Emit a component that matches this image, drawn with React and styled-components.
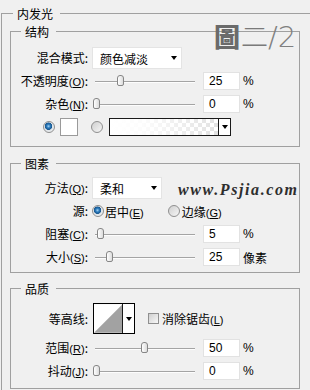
import React from 'react';
import styled, { createGlobalStyle } from 'styled-components';

const Global = createGlobalStyle`
  html, body { margin: 0; padding: 0; background: #f0f0f0; }
  body {
    font-family: "Noto Sans CJK SC", "Noto Sans", sans-serif;
    font-size: 12px;
    color: #000;
  }
`;

const Page = styled.div`
  position: relative;
  width: 310px;
  height: 390px;
  overflow: hidden;
  box-sizing: border-box;
  padding: 6px 0 0 1px;
`;

const Outer = styled.fieldset`
  margin: 0;
  padding: 0;
  min-width: 0;
  border: 1px solid #a0a0a0;
  border-right: none;
  border-bottom: none;
`;

const Legend = styled.legend`
  margin-left: ${p => p.$ml}px;
  padding: 0 7px 0 4px;
  line-height: 15px;
  font-size: 12px;
`;

const Stack = styled.div`
  display: flex;
  flex-direction: column;
  padding: 3px 0 20px 8px;
`;

const Group = styled.fieldset`
  margin: ${p => p.$mt || 0}px 0 0 0;
  padding: 0;
  min-width: 0;
  width: 290px;
  box-sizing: border-box;
  border: 1px solid #a0a0a0;
`;

const Rows = styled.div`
  display: flex;
  flex-direction: column;
  gap: 1px;
  padding: ${p => p.$pt}px 0 ${p => p.$pb}px 0;
`;

const Row = styled.div`
  display: flex;
  align-items: center;
  height: ${p => p.$h || 22}px;
  margin-bottom: ${p => p.$mb || 0}px;
  white-space: nowrap;
`;

const Label = styled.span`
  width: 77px;
  flex-shrink: 0;
  margin-right: 4px;
  text-align: right;
  line-height: 22px;
`;

const Key = styled.span`
  font-family: "Liberation Sans", Arial, sans-serif;
  font-size: 11px;
  u { text-underline-offset: 1px; }
`;

const Select = styled.div`
  display: flex;
  align-items: center;
  justify-content: space-between;
  box-sizing: border-box;
  width: ${p => p.$w}px;
  height: 22px;
  padding: 0 4px 0 7px;
  background: #fff;
  border: 1px solid #e4e4e4;
`;

const Caret = styled.span`
  width: 0;
  height: 0;
  border-left: 3.5px solid transparent;
  border-right: 3.5px solid transparent;
  border-top: 4px solid #000;
`;

const SliderBox = styled.div`
  position: relative;
  width: 106px;
  height: 22px;
  flex-shrink: 0;
`;

const Track = styled.div`
  position: absolute;
  left: 3px;
  right: 3px;
  top: 11px;
  height: 1px;
  background: #a4a4a4;
  border-bottom: 1px solid #fdfdfd;
`;

const Thumb = styled.div`
  position: absolute;
  top: 5px;
  width: 7px;
  height: 11px;
  box-sizing: border-box;
  border: 1px solid #868686;
  border-radius: 3px 3px 2px 2px;
  background: linear-gradient(to right, #ffffff, #dcdcdc);
`;

const NumBox = styled.div`
  box-sizing: border-box;
  width: 37px;
  height: 18px;
  margin-left: 5px;
  padding-left: 5px;
  background: #fff;
  border: 1px solid #e2e2e2;
  font-family: "Liberation Sans", Arial, sans-serif;
  font-size: 12px;
  line-height: 16px;
`;

const Unit = styled.span`
  margin-left: ${p => p.$ml ?? 3}px;
  font-family: ${p => p.$latin ? '"Liberation Sans", Arial, sans-serif' : 'inherit'};
`;

const Radio = styled.span`
  display: inline-block;
  flex-shrink: 0;
  width: 12px;
  height: 12px;
  box-sizing: border-box;
  margin-left: ${p => p.$ml || 0}px;
  border-radius: 50%;
  border: 1px solid #8f8f8f;
  background: ${p => p.$on
    ? 'radial-gradient(circle at 45% 42%, #a6d4f2 0, #2c7bbd 1.8px, #18578f 3.4px, #dfe4e8 4px, #f6f6f6 100%)'
    : 'linear-gradient(135deg, #cfcfcf, #f6f6f6)'};
`;

const OptText = styled.span`
  margin-left: ${p => p.$ml || 0}px;
`;

const Swatch = styled.span`
  box-sizing: border-box;
  width: 18px;
  height: 18px;
  margin-left: 5px;
  background: #fff;
  border: 1px solid #9a9a9a;
`;

const GradBox = styled.div`
  display: flex;
  box-sizing: border-box;
  width: 122px;
  height: 18px;
  margin-left: 6px;
  border: 1px solid #1a1a1a;
`;

const GradFill = styled.div`
  flex: 1;
  background:
    linear-gradient(to right, #ffffff 0%, rgba(255,255,255,0.9) 30%, rgba(255,255,255,0) 100%),
    repeating-conic-gradient(#e2e2e2 0 25%, #ffffff 0 50%) 0 0 / 8px 8px;
`;

const ArrowCell = styled.div`
  display: flex;
  align-items: center;
  justify-content: center;
  width: 11px;
  border-left: 1px solid #1a1a1a;
  background: #fff;
`;

const ContourBox = styled.div`
  display: flex;
  box-sizing: border-box;
  width: 42px;
  height: 31px;
  margin-left: 1px;
  border: 1px solid #000;
  svg { display: block; }
`;

const Check = styled.span`
  box-sizing: border-box;
  width: 11px;
  height: 11px;
  margin-left: 13px;
  border: 1px solid #8f8f8f;
  background: linear-gradient(135deg, #cfcfcf, #f8f8f8);
`;

const WebMark = styled.div`
  position: absolute;
  left: 178px;
  top: 180px;
  font-family: "Liberation Serif", "Times New Roman", serif;
  font-style: italic;
  font-weight: bold;
  font-size: 16px;
  letter-spacing: 1.6px;
  line-height: 20px;
  color: #2e2e2e;
`;

const FigMark = styled.div`
  position: absolute;
  left: 214px;
  top: 19px;
  display: flex;
  align-items: baseline;
  line-height: 34px;
  color: #7a7a7a;
`;

const FigBold = styled.span`
  font-family: "Noto Sans CJK TC", "Noto Sans CJK SC", sans-serif;
  font-weight: 900;
  font-size: 26px;
  color: #6b6b6b;
`;

const FigThin = styled.span`
  font-family: "Noto Sans CJK SC", sans-serif;
  font-weight: 300;
  font-size: 27px;
  margin-left: 1px;
`;

const FigNum = styled.span`
  font-family: "DejaVu Sans", sans-serif;
  font-weight: 200;
  font-size: 29px;
  color: #808080;
`;

function Slider({ value }) {
  const left = 4 + value * 0.96 - 3.5;
  return (
    <SliderBox>
      <Track />
      <Thumb style={{ left: `${left}px` }} />
    </SliderBox>
  );
}

const K = ({ c }) => (
  <Key>(<u>{c}</u>)</Key>
);

function SliderRow({ label, k, value, num, unit = '%', latin = true }) {
  return (
    <Row>
      <Label>{label}{k && <K c={k} />}:</Label>
      <Slider value={value} />
      <NumBox>{num}</NumBox>
      <Unit $latin={latin}>{unit}</Unit>
    </Row>
  );
}

export default function App() {
  return (
    <>
      <Global />
      <Page>
        <Outer>
          <Legend $ml={11}>内发光</Legend>
          <Stack>
            <Group>
              <Legend $ml={10}>结构</Legend>
              <Rows $pt={8} $pb={8}>
                <Row>
                  <Label>混合模式:</Label>
                  <Select $w={90}>颜色减淡<Caret /></Select>
                </Row>
                <SliderRow label="不透明度" k="O" value={25} num="25" />
                <SliderRow label="杂色" k="N" value={0} num="0" />
                <Row>
                  <Radio $on $ml={32} />
                  <Swatch />
                  <Radio $ml={13} />
                  <GradBox>
                    <GradFill />
                    <ArrowCell><Caret /></ArrowCell>
                  </GradBox>
                </Row>
              </Rows>
            </Group>

            <Group $mt={9}>
              <Legend $ml={10}>图素</Legend>
              <Rows $pt={6} $pb={4}>
                <Row>
                  <Label>方法<K c="Q" />:</Label>
                  <Select $w={70}>柔和<Caret /></Select>
                </Row>
                <Row>
                  <Label>源:</Label>
                  <Radio $on />
                  <OptText $ml={1}>居中<K c="E" /></OptText>
                  <Radio $ml={24} />
                  <OptText $ml={2}>边缘<K c="G" /></OptText>
                </Row>
                <SliderRow label="阻塞" k="C" value={5} num="5" />
                <SliderRow label="大小" k="S" value={14} num="25" unit="像素" latin={false} />
              </Rows>
            </Group>

            <Group $mt={8}>
              <Legend $ml={10}>品质</Legend>
              <Rows $pt={7} $pb={6}>
                <Row $h={31} $mb={2}>
                  <Label>等高线:</Label>
                  <ContourBox>
                    <svg width="29" height="29" viewBox="0 0 29 29">
                      <rect x="0" y="0" width="29" height="29" fill="#ffffff" />
                      <polygon points="0,29 29,0 29,29" fill="#a2a2a2" />
                    </svg>
                    <ArrowCell><Caret /></ArrowCell>
                  </ContourBox>
                  <Check />
                  <OptText $ml={3}>消除锯齿<K c="L" /></OptText>
                </Row>
                <SliderRow label="范围" k="R" value={50} num="50" />
                <SliderRow label="抖动" k="J" value={0} num="0" />
              </Rows>
            </Group>
          </Stack>
        </Outer>
        <FigMark>
          <FigBold>圖</FigBold>
          <FigThin>二</FigThin>
          <FigNum>/2</FigNum>
        </FigMark>
        <WebMark>www.Psjia.com</WebMark>
      </Page>
    </>
  );
}
